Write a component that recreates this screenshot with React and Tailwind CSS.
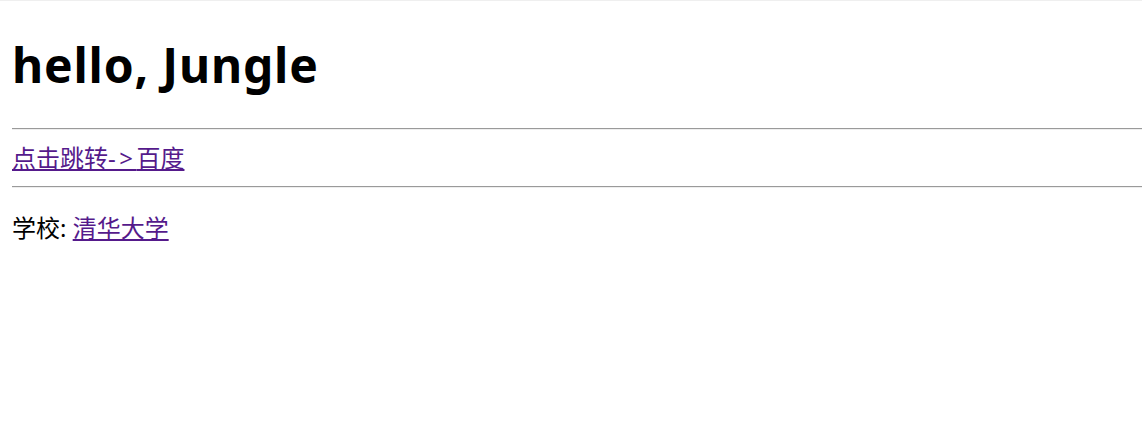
import React from "react";

function App() {
  return (
    <div
      className="min-h-screen bg-white border-t border-[#efefef] text-black"
      style={{ fontFamily: '"Noto Sans", "Noto Sans CJK SC", sans-serif' }}
    >
      <div className="pl-[12px]">
        <h1 className="mt-[32px] mb-[31px] text-[48px] leading-[64px] font-bold tracking-[0.8px]">hello, Jungle</h1>
        <hr className="border-0 border-t border-t-[#9a9a9a] border-b border-b-[#eeeeee]" />
        <div className="my-[12px] text-[24px] leading-[32px]">
          <a href="#" className="text-[#551a8b] underline">
            点击跳转<span className="tracking-[3.5px]">-&gt;</span>百度
          </a>
        </div>
        <hr className="border-0 border-t border-t-[#9a9a9a] border-b border-b-[#eeeeee]" />
        <p className="mt-[24px] text-[24px] leading-[32px]">
          学校: <a href="#" className="text-[#551a8b] underline">清华大学</a>
        </p>
      </div>
    </div>
  );
}

export default App;
